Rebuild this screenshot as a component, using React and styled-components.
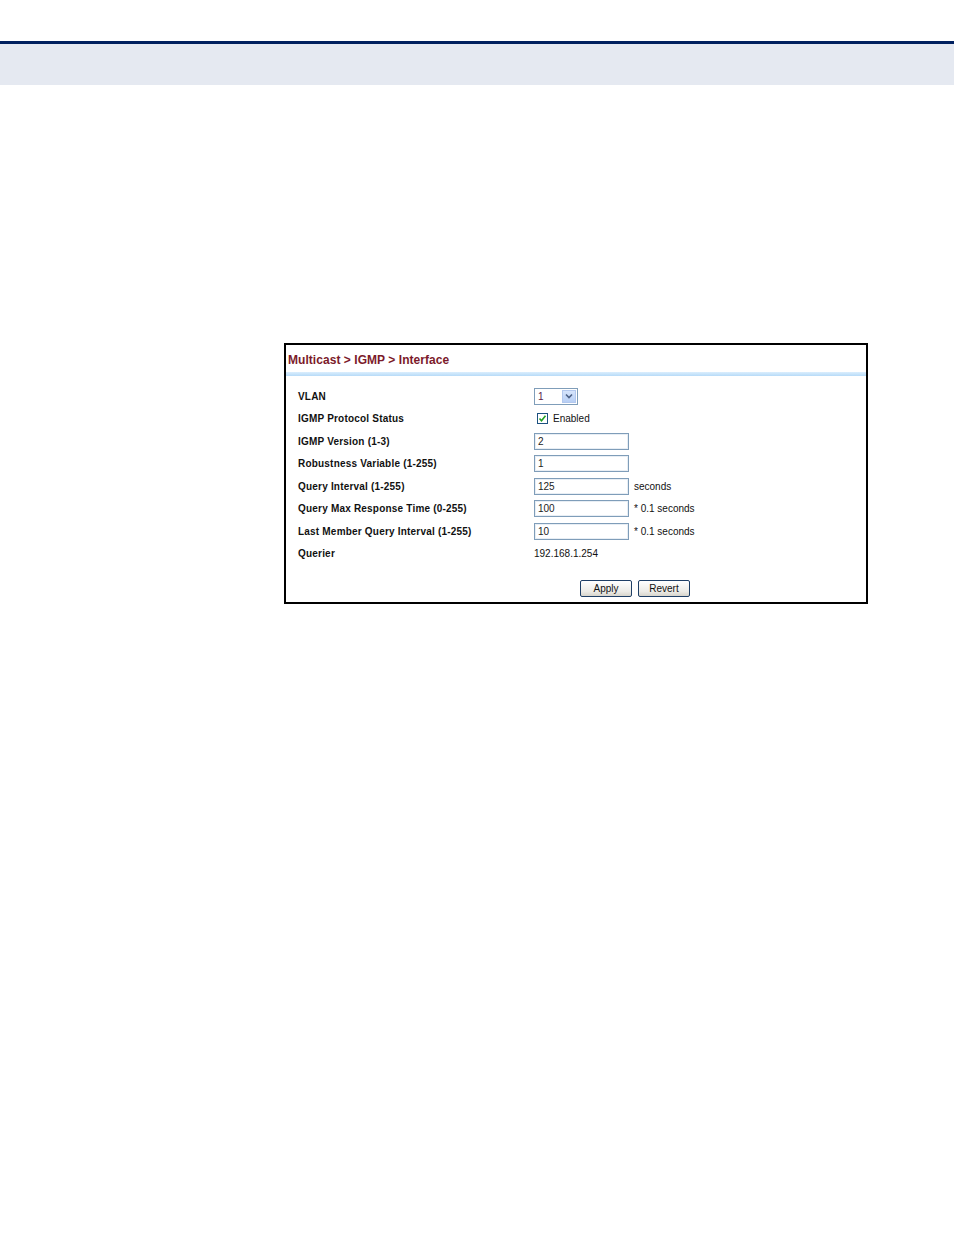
import React from 'react';
import styled, { createGlobalStyle } from 'styled-components';

const GlobalStyle = createGlobalStyle`
  body {
    margin: 0;
    background: #fff;
    font-family: "Liberation Sans", Arial, sans-serif;
  }
`;

const Page = styled.div`
  width: 954px;
  min-height: 1235px;
  padding-top: 41px;
`;

const HeaderBar = styled.div`
  height: 41px;
  background: #e5e9f1;
  border-top: 3px solid #00205f;
`;

const Panel = styled.div`
  margin: 258px 0 0 284px;
  width: 584px;
  height: 261px;
  box-sizing: border-box;
  border: 2px solid #000;
  display: flex;
  flex-direction: column;
`;

const Title = styled.div`
  padding: 8px 0 0 2px;
  height: 19px;
  font-size: 12px;
  font-weight: bold;
  color: #7b1a2a;
  letter-spacing: 0.05px;
`;

const Rule = styled.div`
  height: 4px;
  background: linear-gradient(#dbeefd, #b7dbf8);
  margin-bottom: 9px;
`;

const Form = styled.div`
  display: grid;
  grid-template-columns: 236px 1fr;
  grid-auto-rows: 22.5px;
  padding-left: 12px;
`;

const Label = styled.div`
  display: flex;
  align-items: center;
  font-size: 10px;
  font-weight: bold;
  letter-spacing: 0.2px;
  color: #111;
`;

const Field = styled.div`
  display: flex;
  align-items: center;
  gap: 5px;
  font-size: 10px;
  color: #111;
  padding-left: ${p => p.$shift || 0}px;
`;

const Input = styled.div`
  width: 90px;
  height: 15px;
  border: 1px solid #7f9db9;
  box-shadow: inset 0 0 0 1px #e8eef4;
  padding-left: 3px;
  display: flex;
  align-items: center;
  font-size: 10px;
  color: #222;
  background: #fff;
`;

const Select = styled.div`
  width: 39px;
  height: 15px;
  border: 1px solid #7f9db9;
  display: flex;
  align-items: center;
  justify-content: space-between;
  padding-left: 3px;
  font-size: 10px;
  color: #5a1a4a;
`;

const Arrow = styled.div`
  width: 14px;
  height: 13px;
  margin-right: 1px;
  background: linear-gradient(#d6e4fb, #b8cff5);
  border: 1px solid #b3c8ee;
  box-sizing: border-box;
  display: flex;
  align-items: center;
  justify-content: center;
`;

const Check = styled.div`
  width: 11px;
  height: 11px;
  border: 1px solid #1c5180;
  box-sizing: border-box;
  margin-left: 3px;
  display: flex;
  align-items: center;
  justify-content: center;
  background: #fff;
`;

const Buttons = styled.div`
  display: flex;
  gap: 6px;
  margin: 15px 0 0 294px;
`;

const Button = styled.div`
  width: 50px;
  height: 15px;
  border: 1px solid #1f3f66;
  border-radius: 2px;
  background: linear-gradient(#ffffff, #ecebe6 70%, #d8d5cc);
  font-size: 10px;
  color: #111;
  display: flex;
  align-items: center;
  justify-content: center;
`;

const rows = [
  { label: 'IGMP Version (1-3)', value: '2' },
  { label: 'Robustness Variable (1-255)', value: '1' },
  { label: 'Query Interval (1-255)', value: '125', unit: 'seconds' },
  { label: 'Query Max Response Time (0-255)', value: '100', unit: '* 0.1 seconds' },
  { label: 'Last Member Query Interval (1-255)', value: '10', unit: '* 0.1 seconds' },
];

export default function App() {
  return (
    <Page>
      <GlobalStyle />
      <HeaderBar />
      <Panel>
        <Title>Multicast &gt; IGMP &gt; Interface</Title>
        <Rule />
        <Form>
          <Label>VLAN</Label>
          <Field>
            <Select>
              1
              <Arrow>
                <svg width="8" height="6" viewBox="0 0 8 6">
                  <path d="M1 1.5 L4 4.5 L7 1.5" fill="none" stroke="#4d6185" strokeWidth="1.6" />
                </svg>
              </Arrow>
            </Select>
          </Field>
          <Label>IGMP Protocol Status</Label>
          <Field>
            <Check>
              <svg width="9" height="9" viewBox="0 0 9 9">
                <path d="M1.5 4.5 L3.5 6.8 L7.5 1.8" fill="none" stroke="#21a121" strokeWidth="1.6" />
              </svg>
            </Check>
            Enabled
          </Field>
          {rows.map(r => (
            <React.Fragment key={r.label}>
              <Label>{r.label}</Label>
              <Field>
                <Input>{r.value}</Input>
                {r.unit && <span>{r.unit}</span>}
              </Field>
            </React.Fragment>
          ))}
          <Label>Querier</Label>
          <Field $shift={-1}>192.168.1.254</Field>
        </Form>
        <Buttons>
          <Button>Apply</Button>
          <Button>Revert</Button>
        </Buttons>
      </Panel>
    </Page>
  );
}
